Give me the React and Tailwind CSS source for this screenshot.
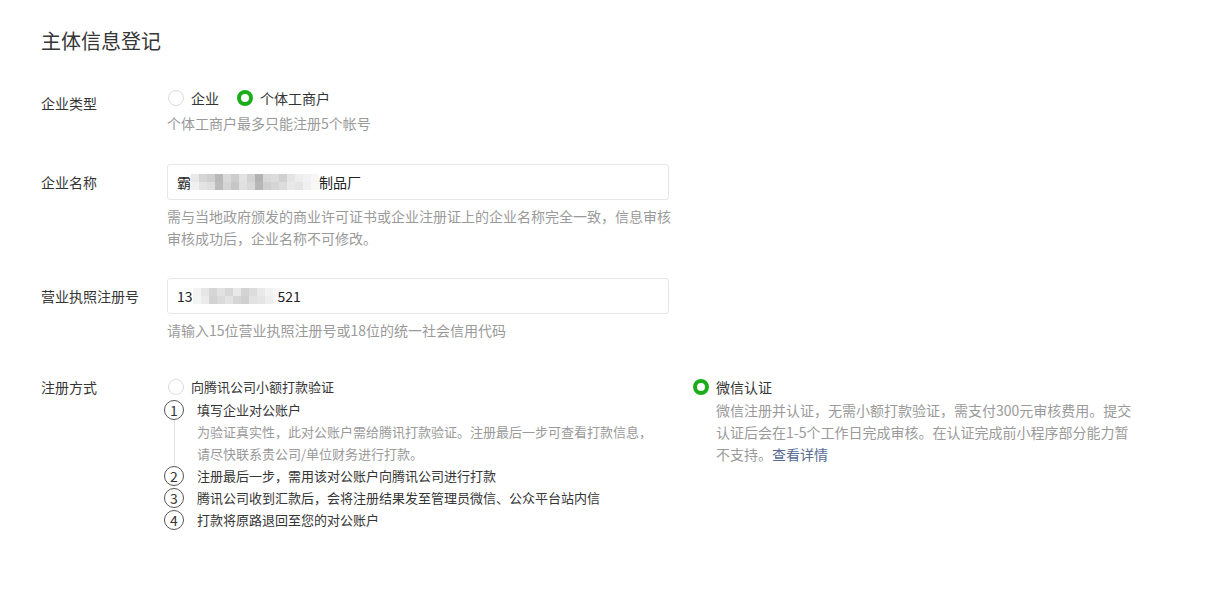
import React from 'react';

const font = { fontFamily: '"Noto Sans CJK SC", "Noto Sans", sans-serif' };

const nameMosaic = [
  ['#e9e9e9', '#d6d6d6', '#cfcfcf', '#b9b9b9', '#d9d9d9', '#cdcdcd', '#e2e2e2', '#d2d2d2', '#b3b3b3', '#d8d8d8', '#dcdcdc', '#d0d0d0', '#e4e4e4', '#ededed', '#f2f2f2', '#f6f6f6'],
  ['#f0f0f0', '#e3e3e3', '#dedede', '#bcbcbc', '#d4d4d4', '#c6c6c6', '#e0e0e0', '#d9d9d9', '#b7b7b7', '#cfcfcf', '#d5d5d5', '#dcdcdc', '#e8e8e8', '#e4e4e4', '#f0f0f0', '#f7f7f7'],
];

const codeMosaic = [
  ['#f3f3f3', '#e6e6e6', '#d6d6d6', '#e1e1e1', '#d7d7d7', '#e8e8e8', '#d3d3d3', '#dcdcdc', '#e9e9e9', '#f2f2f2', '#f6f6f6'],
  ['#f4f4f4', '#ececec', '#d2d2d2', '#dadada', '#e3e3e3', '#d6d6d6', '#cfcfcf', '#e2e2e2', '#e5e5e5', '#eeeeee', '#f7f7f7'],
];

function Mosaic({ rows }) {
  return (
    <span className="inline-flex flex-col">
      {rows.map((row, r) => (
        <span key={r} className="flex">
          {row.map((c, i) => (
            <span key={i} className="block h-[8px] w-[8px]" style={{ backgroundColor: c }} />
          ))}
        </span>
      ))}
    </span>
  );
}

function Radio({ checked }) {
  return checked ? (
    <span className="box-border block h-[16px] w-[16px] shrink-0 rounded-full border-[4px] border-[#1aad19] bg-white" />
  ) : (
    <span className="box-border block h-[16px] w-[16px] shrink-0 rounded-full border border-[#dcdcdc] bg-white" />
  );
}

function StepNum({ n }) {
  return (
    <span className="box-border flex h-[20px] w-[20px] shrink-0 items-center justify-center rounded-full border border-[#555] text-[14px] leading-none text-[#353535]">
      {n}
    </span>
  );
}

function Label({ children, className = '' }) {
  return <div className={`w-[126px] shrink-0 text-[14px] leading-[22px] text-[#353535] ${className}`}>{children}</div>;
}

export default function App() {
  return (
    <div className="min-h-[598px] whitespace-nowrap bg-white pl-[41px] pt-[27px] text-[#353535]" style={font}>
      <h1 className="text-[20px] font-normal leading-[28px] text-[#353535]">主体信息登记</h1>

      {/* 企业类型 */}
      <div className="mt-[32px] flex">
        <Label className="pt-[5px]">企业类型</Label>
        <div>
          <div className="flex h-[22px] items-center text-[14px]">
            <span className="ml-px"><Radio /></span>
            <span className="ml-[7px]">企业</span>
            <span className="ml-[18px]"><Radio checked /></span>
            <span className="ml-[7px]">个体工商户</span>
          </div>
          <p className="mt-[3px] text-[14px] leading-[22px] text-[#9a9a9a]">个体工商户最多只能注册5个帐号</p>
        </div>
      </div>

      {/* 企业名称 */}
      <div className="mt-[30px] flex">
        <Label className="pt-[7px]">企业名称</Label>
        <div className="w-[502px]">
          <div className="flex h-[36px] items-center rounded-[3px] border border-[#e7e7e7] px-[9px] text-[14px] text-[#222]">
            <span>霸</span>
            <Mosaic rows={nameMosaic} />
            <span>制品厂</span>
          </div>
          <p className="mt-[5px] text-[14px] leading-[22px] text-[#9a9a9a]">
            需与当地政府颁发的商业许可证书或企业注册证上的企业名称完全一致，信息审核
            <br />
            审核成功后，企业名称不可修改。
          </p>
        </div>
      </div>

      {/* 营业执照注册号 */}
      <div className="mt-[29px] flex">
        <Label className="pt-[7px]">营业执照注册号</Label>
        <div className="w-[502px]">
          <div className="flex h-[36px] items-center rounded-[3px] border border-[#e7e7e7] px-[9px] text-[14px] text-[#222]">
            <span>13</span>
            <Mosaic rows={codeMosaic} />
            <span className="-ml-[3px]">521</span>
          </div>
          <p className="mt-[5px] text-[14px] leading-[22px] text-[#9a9a9a]">请输入15位营业执照注册号或18位的统一社会信用代码</p>
        </div>
      </div>

      {/* 注册方式 */}
      <div className="mt-[35px] flex">
        <Label>注册方式</Label>
        <div className="flex">
          <div className="w-[526px]">
            <div className="flex h-[22px] items-center text-[13px]">
              <span className="ml-px"><Radio /></span>
              <span className="ml-[7px]">向腾讯公司小额打款验证</span>
            </div>
            <div className="-ml-[3px] mt-px text-[13px] leading-[22px]">
              <div className="flex">
                <div className="flex w-[20px] shrink-0 flex-col items-center pt-px">
                  <StepNum n="1" />
                  <span className="w-px flex-1 bg-[#e0e0e0]" />
                </div>
                <div className="ml-[13px]">
                  <p>填写企业对公账户</p>
                  <p className="text-[#9a9a9a]">
                    为验证真实性，此对公账户需给腾讯打款验证。注册最后一步可查看打款信息，
                    <br />
                    请尽快联系贵公司/单位财务进行打款。
                  </p>
                </div>
              </div>
              {[
                ['2', '注册最后一步，需用该对公账户向腾讯公司进行打款'],
                ['3', '腾讯公司收到汇款后，会将注册结果发至管理员微信、公众平台站内信'],
                ['4', '打款将原路退回至您的对公账户'],
              ].map(([n, text]) => (
                <div key={n} className="flex h-[22px] items-center">
                  <StepNum n={n} />
                  <span className="ml-[13px]">{text}</span>
                </div>
              ))}
            </div>
          </div>

          <div>
            <div className="flex h-[22px] items-center text-[14px]">
              <Radio checked />
              <span className="ml-[7px]">微信认证</span>
            </div>
            <p className="ml-[23px] mt-px text-[14px] leading-[22px] text-[#9a9a9a]">
              微信注册并认证，无需小额打款验证，需支付300元审核费用。提交
              <br />
              认证后会在1-5个工作日完成审核。在认证完成前小程序部分能力暂
              <br />
              不支持。<a className="text-[#576b95]">查看详情</a>
            </p>
          </div>
        </div>
      </div>
    </div>
  );
}
